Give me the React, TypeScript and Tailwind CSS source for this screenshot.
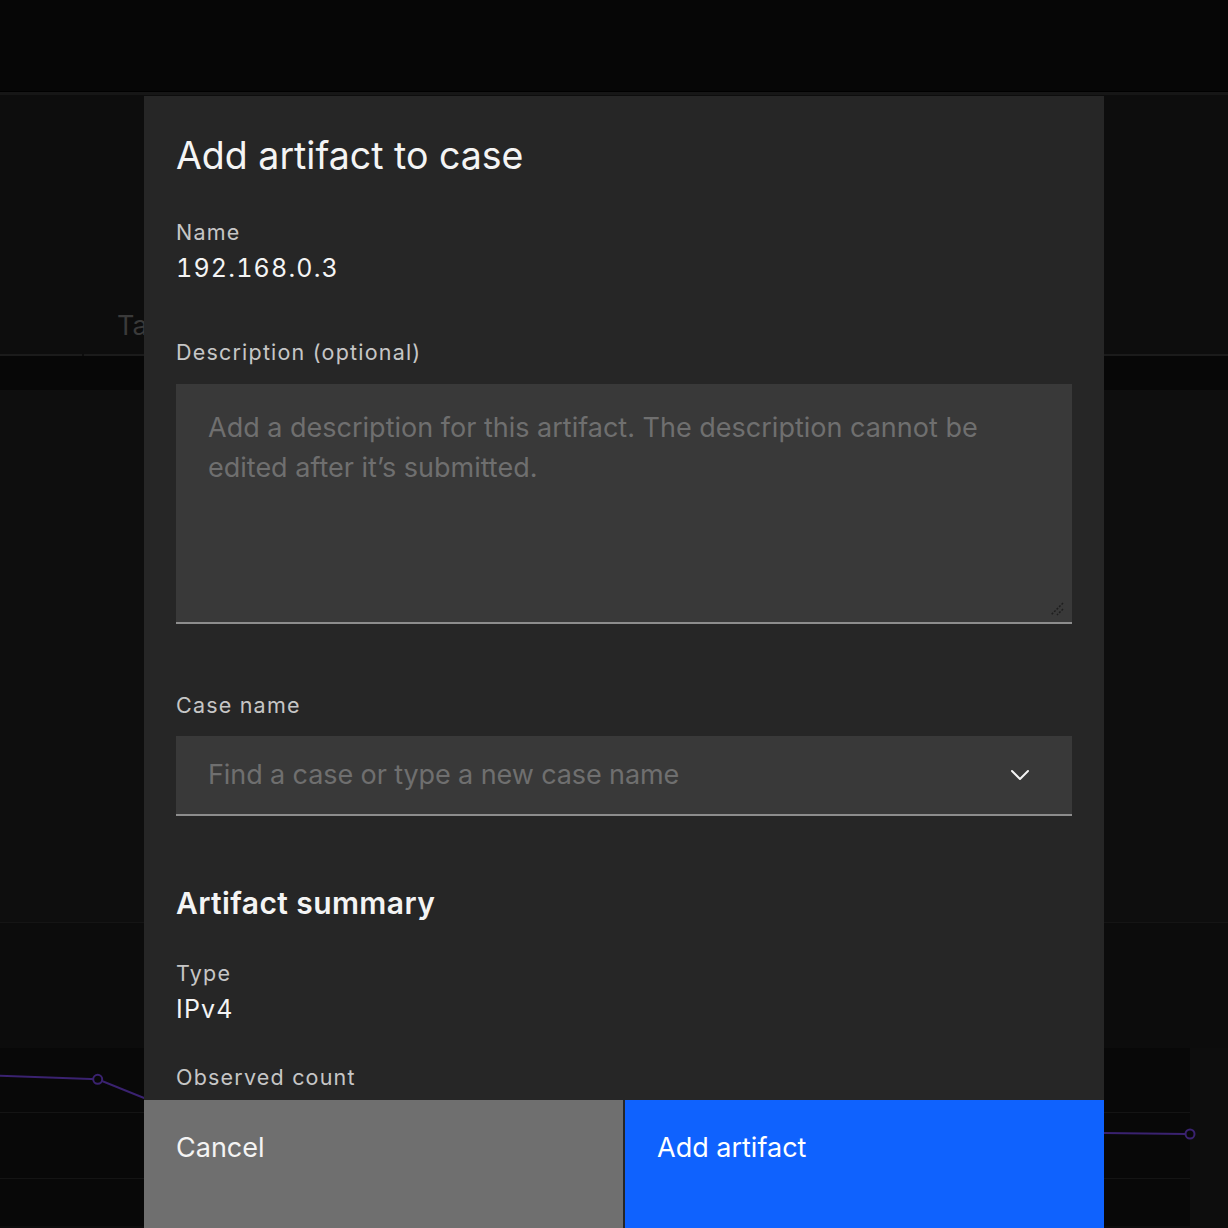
import { ChevronDown } from 'lucide-react';

function Backdrop() {
  return (
    <div className="flex flex-col min-h-[1228px] bg-[#0d0d0d]">
      <div className="h-[92px] bg-[#060606] border-b border-black" />
      <div className="h-[3px] bg-[#161616]" />

      <div className="h-[261px] flex items-end">
        <div className="flex w-full">
          <div className="w-[82px] h-[48px] border-b-2 border-[#1b1b1b]" />
          <div className="w-[2px]" />
          <div className="flex-1 h-[48px] border-b-2 border-[#1b1b1b] pl-[33px] text-[27px] leading-[36px] text-[#3a3a3a]">
            Tab
          </div>
        </div>
      </div>

      <div className="h-[34px] bg-[#070707]" />
      <div className="h-[533px] bg-[#0e0e0e] border-b border-[#151515]" />
      <div className="h-[125px] bg-[#0c0c0c]" />

      <div className="flex flex-1">
        <div className="relative w-[1190px] h-[178px] bg-[#080808]">
          <div className="h-[65px] border-b border-[#141414]" />
          <div className="h-[66px] border-b border-[#141414]" />
          <svg className="absolute left-0 top-0 overflow-visible" width="1190" height="178" viewBox="0 0 1190 178">
            <polyline
              points="0,27.7 97.7,31.3 144,50 400,70 800,85 1104,85 1186,86"
              fill="none"
              stroke="#3a2270"
              strokeWidth="2"
            />
            <circle cx="97.7" cy="31.3" r="4.5" fill="#080808" stroke="#3a2270" strokeWidth="2" />
            <circle cx="1190" cy="86" r="4.5" fill="#080808" stroke="#3a2270" strokeWidth="2" />
          </svg>
        </div>
        <div className="flex-1 bg-[#0d0d0d]" />
      </div>
    </div>
  );
}

export default function App() {
  return (
    <div className="relative w-[1228px] h-[1228px] overflow-hidden font-['Inter',sans-serif]">
      <Backdrop />

      <div className="absolute left-[144px] top-[96px] w-[960px] h-[1132px] flex flex-col bg-[#262626]">
        <div className="flex-1 overflow-hidden px-8 pt-[36px]">
          <h2 className="text-[37.5px] leading-[48px] font-normal text-[#f4f4f4]">Add artifact to case</h2>

          <div className="mt-[38px] text-[21.5px] leading-[28px] tracking-[1.2px] text-[#c6c6c6]">Name</div>
          <div className="mt-[6px] text-[25px] leading-[32px] tracking-[1.2px] tabular-nums text-[#f4f4f4]">192.168.0.3</div>

          <div className="mt-[54px] text-[21.5px] leading-[28px] tracking-[1.2px] text-[#c6c6c6]">Description (optional)</div>
          <div className="relative mt-[18px]">
            <textarea
              className="block w-full h-[240px] resize-none bg-[#393939] border-b-2 border-[#8d8d8d] px-8 pt-6 text-[27px] leading-[40px] text-[#f4f4f4] placeholder:text-[#6f6f6f] outline-none"
              placeholder="Add a description for this artifact. The description cannot be edited after it’s submitted."
            />
            <svg className="absolute right-[8px] bottom-[8px]" width="14" height="14" viewBox="0 0 14 14">
              <line x1="13" y1="1" x2="1" y2="13" stroke="#1e1e1e" strokeWidth="1.5" strokeDasharray="2 1.5" />
              <line x1="13" y1="7" x2="7" y2="13" stroke="#1e1e1e" strokeWidth="1.5" strokeDasharray="2 1.5" />
            </svg>
          </div>

          <div className="mt-[67px] text-[21.5px] leading-[28px] tracking-[1.2px] text-[#c6c6c6]">Case name</div>
          <div className="mt-[17px] h-[80px] flex items-center bg-[#393939] border-b-2 border-[#8d8d8d] px-8">
            <span className="flex-1 text-[27px] leading-[36px] tracking-[-0.1px] text-[#6f6f6f]">Find a case or type a new case name</span>
            <ChevronDown className="w-[32px] h-[32px] mr-[4px] text-[#f4f4f4]" strokeWidth={1.5} />
          </div>

          <h3 className="mt-[69px] text-[30px] leading-[36px] font-semibold tracking-[0.4px] text-[#f4f4f4]">Artifact summary</h3>

          <div className="mt-[38px] text-[21.5px] leading-[28px] tracking-[1.2px] text-[#c6c6c6]">Type</div>
          <div className="mt-[6px] text-[25px] leading-[32px] tracking-[1.2px] text-[#f4f4f4]">IPv4</div>

          <div className="mt-[38px] text-[21.5px] leading-[28px] tracking-[1.2px] text-[#c6c6c6]">Observed count</div>
        </div>

        <div className="grid grid-cols-2 gap-[2px] h-[128px] shrink-0">
          <button className="bg-[#6f6f6f] text-left px-8 pt-[30px] self-stretch flex items-start text-[27px] leading-[36px] text-[#f4f4f4]">
            Cancel
          </button>
          <button className="bg-[#0f62fe] text-left px-8 pt-[30px] self-stretch flex items-start text-[27px] leading-[36px] text-white">
            Add artifact
          </button>
        </div>
      </div>
    </div>
  );
}
